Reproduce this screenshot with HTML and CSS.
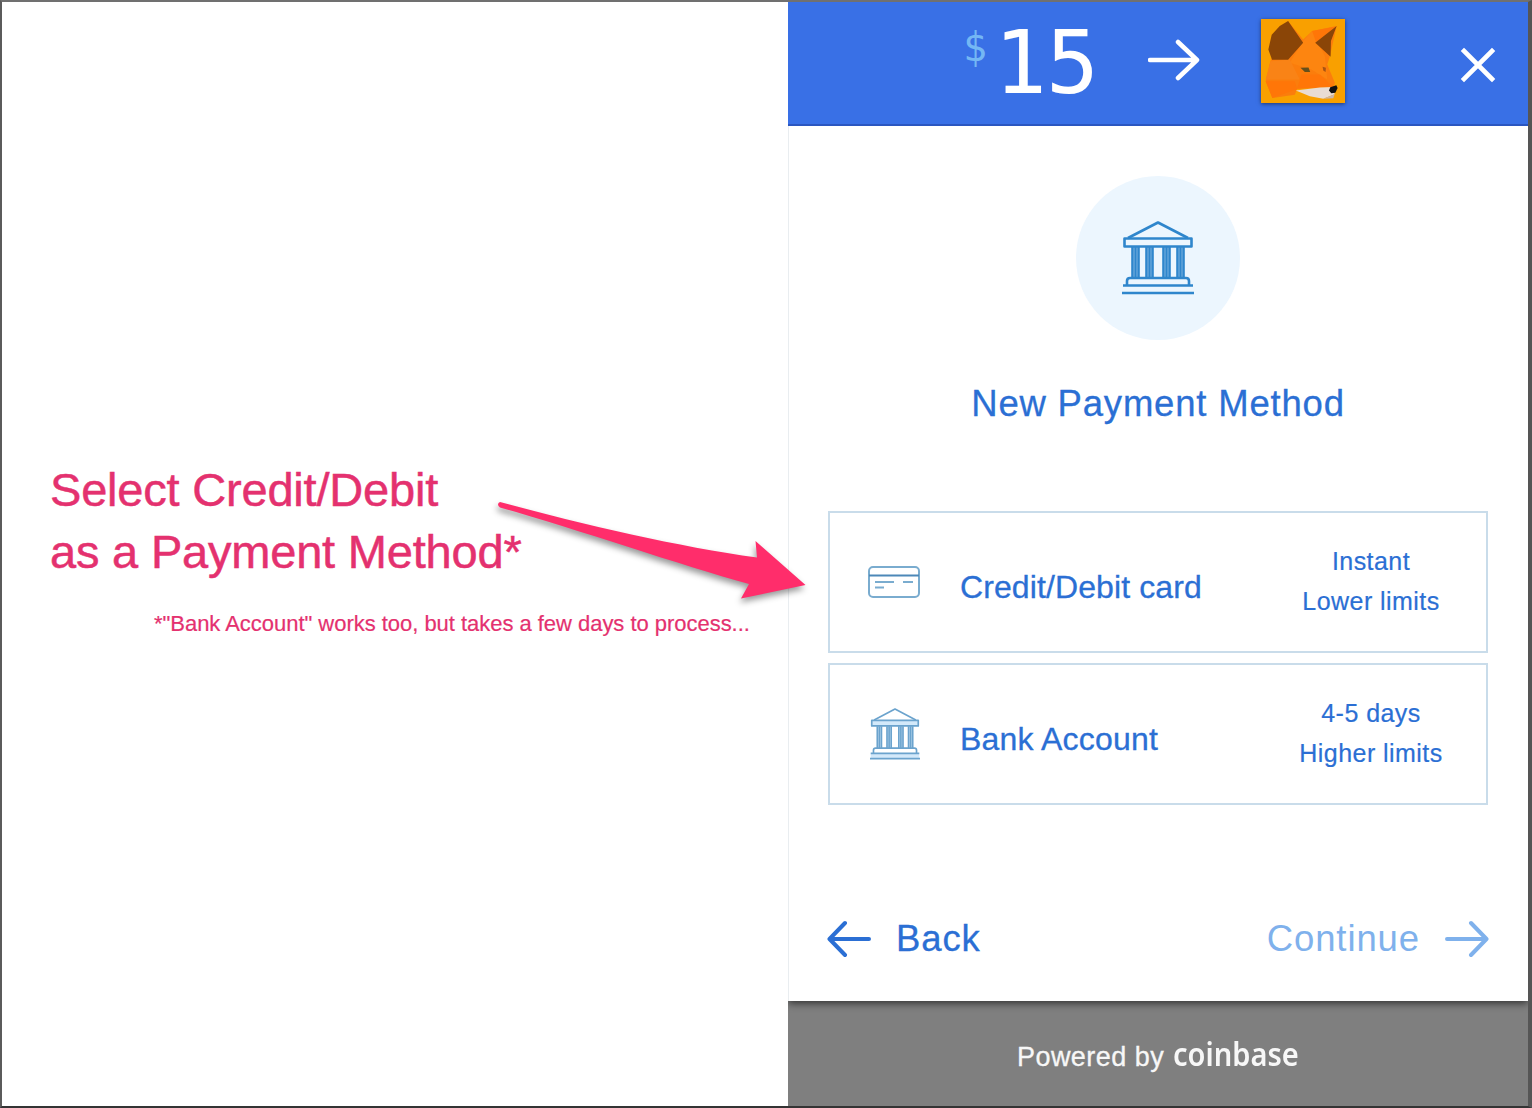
FILE: index.html
```html
<!DOCTYPE html>
<html lang="en">
<head>
<meta charset="utf-8">
<title>New Payment Method</title>
<link rel="stylesheet" href="styles.css">
</head>
<body>
<svg class="defs" width="0" height="0">
  <symbol id="bank" viewBox="0 0 72 74">
    <g fill="none" stroke="currentColor" stroke-linejoin="round">
      <path d="M6 17 36 1.500 66 17"/>
      <path d="M2.500 17.500h67v8h-67z"/>
      <path d="M10.500 26v31M13.500 26v31M16.500 26v31M24.500 26v31M27.500 26v31M30.500 26v31M41.500 26v31M44.500 26v31M47.500 26v31M55.500 26v31M58.500 26v31M61.500 26v31"/>
      <path d="M1 64.500h4V60q0-3 3-3h56q3 0 3 3v4.500h4M5 64.500h62M0 72h72"/>
    </g>
  </symbol>
</svg>
<div class="frame">
  <section class="note">
    <h1><span>Select Credit/Debit</span><span>as a Payment Method*</span></h1>
    <p>*"Bank Account" works too, but takes a few days to process...</p>
    <svg class="pointer" width="340" height="130" viewBox="480 490 340 130">
      <path d="M500 502C585 525 680 547 757 557.500L755.500 541 805.500 585 741 598.500 749 584C680 565 580 530 500 507.500Q496 504 500 502Z" fill="#ff2d6b"/>
    </svg>
  </section>
  <section class="widget">
    <header>
      <span class="currency">$</span>
      <span class="amount">15</span>
      <svg class="to" width="52" height="44" viewBox="0 0 52 44"><path d="M2 22h46M30 4l19 18-19 18" fill="none" stroke="#fff" stroke-width="4.500" stroke-linecap="round" stroke-linejoin="round"/></svg>
      <svg class="fox" width="84" height="84" viewBox="64 59 251 251">
        <path fill="#f9a000" d="M64 59h251v251H64z"/>
        <path fill="#fb7d0c" d="M145 66 190 120 217 95 290 80 270 170 262 195 285 250 280 262 172 268 165 285 98 295 78 245 92 185z"/>
        <path fill="#fd8510" d="M190 125 217 95 255 170 262 240 215 210 150 190z"/>
        <path fill="#ff7608" d="M217 95 285 82 228 128zM78 245 165 245 172 268 98 295zM185 225 240 225 280 262 172 266z"/>
        <path fill="#f98316" d="M92 185 150 180 180 240 78 240z"/>
        <path fill="#8a4507" d="M145 65 190 130 145 181 97 181 86 150 96 106 120 80zM290 80 273 125 272 172 226 130z"/>
        <path fill="#e9dcd3" d="M168 273 240 264 280 262 284 284 250 297 210 290z"/>
        <path fill="#c9b6ad" d="M250 297 284 284 280 296z"/>
        <path fill="#65501d" d="M182 205 206 204 211 217 195 217z"/>
        <path fill="#a85414" d="M248 202 258 205 257 217 250 213z"/>
        <path fill="#111" d="M271 263 289 257 293 265 286 279 274 281 267 273z"/>
      </svg>
      <svg class="close" width="36" height="36" viewBox="0 0 36 36"><path d="M4 4l28 28M32 4L4 32" fill="none" stroke="#fff" stroke-width="4.600" stroke-linecap="square"/></svg>
    </header>
    <main>
      <div class="badge"><svg class="bank-lg" width="72" height="74"><use href="#bank"/></svg></div>
      <h2>New Payment Method</h2>
      <div class="options">
        <div class="option">
          <svg class="card" width="52" height="32" viewBox="0 0 52 32"><g fill="none" stroke="#7aaccf" stroke-width="2"><rect x="1" y="1" width="50" height="30" rx="4"/><path stroke="#4c88b8" d="M1 9.500h50"/><path d="M7 16h19M35 16h10M7 21.500h9"/></g></svg>
          <span class="name card-name">Credit/Debit card</span>
          <span class="info"><span>Instant</span><span>Lower limits</span></span>
        </div>
        <div class="option">
          <svg class="bank-sm" width="50" height="52" viewBox="0 0 72 74" preserveAspectRatio="none"><path fill="#d3e9fa" d="M2 17h68v9H2zM10 26h7v30h-7zM24 26h7v30h-7zM41 26h7v30h-7zM55 26h7v30h-7zM1 65h70v7H1z"/><use href="#bank" width="72" height="74"/></svg>
          <span class="name bank-name">Bank Account</span>
          <span class="info"><span>4-5 days</span><span>Higher limits</span></span>
        </div>
      </div>
      <nav>
        <a class="back"><svg width="44" height="38" viewBox="0 0 44 38"><path d="M42 19H3M18 3L2.500 19 18 35" fill="none" stroke="currentColor" stroke-width="4" stroke-linecap="round" stroke-linejoin="round"/></svg><span>Back</span></a>
        <a class="next"><span>Continue</span><svg width="44" height="38" viewBox="0 0 44 38"><path d="M2 19h39M26 3l15.500 16L26 35" fill="none" stroke="currentColor" stroke-width="4" stroke-linecap="round" stroke-linejoin="round"/></svg></a>
      </nav>
    </main>
    <footer><span class="powered">Powered by</span><span class="brand">coinbase</span></footer>
  </section>
</div>
</body>
</html>
```
FILE: styles.css
```css
* { box-sizing: border-box; }
body { margin: 0; font-family: "Liberation Sans", Arial, sans-serif; background: #fff; }
.defs { position: absolute; }
.frame {
  display: flex; width: 1532px; height: 1108px; overflow: hidden;
  border-style: solid; border-width: 2px 4px 2px 2px;
  border-color: #707070 #555 #343434 #5b5b5b;
}
.note { position: relative; width: 786px; padding: 457px 0 0 48px; color: #e4316f; }
h1 { margin: 0; font-size: 47px; line-height: 62px; font-weight: 400; white-space: nowrap; letter-spacing: -.2px; -webkit-text-stroke: .5px; }
h1 span { display: block; }
.note p { margin: 27px 0 0 104px; font-size: 22px; line-height: 28px; white-space: nowrap; letter-spacing: -.03px; -webkit-text-stroke: .2px; }
.pointer { position: absolute; left: 478px; top: 488px; z-index: 2; filter: drop-shadow(-1px 4px 3px rgba(0,0,0,.4)); }
.widget { width: 740px; display: flex; flex-direction: column; }
header {
  height: 124px; background: #3970e6; border-bottom: 2px solid #2b56c0;
  display: flex; align-items: flex-start; padding-left: 175px; color: #fff;
  font-family: "DejaVu Sans Mono", monospace;
}
header > * { flex: none; }
.currency { width: 31px; margin-top: 20px; font-size: 40px; line-height: 50px; color: #74b7f4; }
.amount { width: 110px; font-size: 88px; line-height: 104px; margin-top: 9px; letter-spacing: -1px; }
.to { margin: 36px 0 0 44px; }
.fox { margin: 17px 0 0 61px; box-shadow: 0 1px 4px rgba(0,0,0,.5); }
.close { margin: 45px 0 0 115px; }
main { height: 875px; border-left: 1px solid #e9edf0; padding: 50px 40px 0 39px; display: flex; flex-direction: column; color: #2b6fd4; position: relative; box-shadow: 0 2px 8px rgba(0,0,0,.65); clip-path: inset(0 0 -12px 0); }
.badge { width: 164px; height: 164px; border-radius: 50%; background: #ecf6fe; align-self: center; display: flex; align-items: center; justify-content: center; }
.bank-lg { color: #2f86cc; stroke-width: 2.6; }
h2 { margin: 43px 0 0; text-align: center; font-size: 36.500px; line-height: 42px; font-weight: 400; letter-spacing: .8px; -webkit-text-stroke: .3px; }
.options { margin-top: 86px; display: grid; gap: 10px; }
.option { height: 142px; border: 2px solid #c9dcea; display: flex; align-items: center; padding-left: 38px; }
.option > svg { flex: none; }
.card { margin-right: 1px; }
.bank-sm { color: #6ba3cd; stroke-width: 2.4; margin: 0 1px 0 2px; }
.name { margin-left: 39px; font-size: 32px; line-height: 40px; letter-spacing: .1px; width: 300px; padding-top: 9px; -webkit-text-stroke: .3px; }
.bank-name { letter-spacing: .2px; }
.info { width: 180px; display: flex; flex-direction: column; align-items: center; font-size: 25px; line-height: 39.500px; letter-spacing: .45px; padding-bottom: 1px; margin-left: 21px; flex: none; -webkit-text-stroke: .2px; }
nav { margin-top: 112px; display: flex; justify-content: space-between; font-size: 36.500px; line-height: 44px; }
nav a { display: flex; align-items: center; letter-spacing: .9px; gap: 25px; -webkit-text-stroke: .3px; }
.back svg { margin-left: -1px; }
.next svg { margin-right: -1px; }
.next { color: #7fb1ec; -webkit-text-stroke: 0; }
footer { flex: 1; background: #7f7f7f; color: #f7f7f7; display: flex; align-items: baseline; padding: 33px 0 0 229px; }
.powered { font-size: 27px; letter-spacing: .45px; width: 156px; white-space: nowrap; -webkit-text-stroke: .3px; }
.brand { font: 600 33px/40px "Noto Sans", sans-serif; transform: scaleX(.88); transform-origin: 0 0; }
```
